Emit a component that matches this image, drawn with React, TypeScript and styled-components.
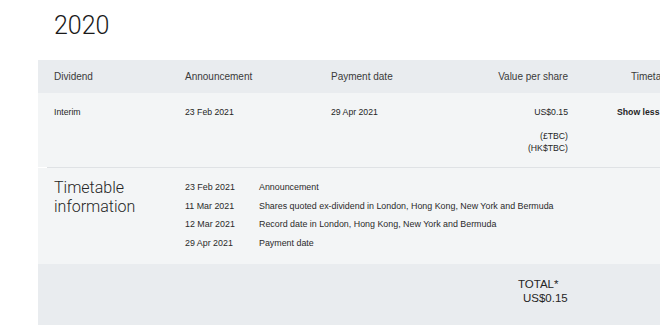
import React from "react";
import styled, { createGlobalStyle } from "styled-components";

const Global = createGlobalStyle`
  html, body { margin: 0; padding: 0; background: #ffffff; }
  body {
    font-family: "Liberation Sans", Arial, sans-serif;
    color: #252525;
    overflow: hidden;
    width: 660px;
    height: 330px;
  }
`;

const Page = styled.div`
  width: 660px;
  height: 330px;
  overflow: hidden;
  padding-left: 38px;
  box-sizing: border-box;
`;

const Title = styled.h2`
  margin: 0;
  padding: 10px 0 0 16px;
  height: 60px;
  box-sizing: border-box;
  font-family: Roboto, "Liberation Sans", sans-serif;
  font-weight: 300;
  font-size: 25px;
  line-height: 32px;
  color: #1a1a1a;
`;

const Table = styled.div`
  width: 720px;
`;

const Row = styled.div<{ $bg: string; $h?: number }>`
  display: grid;
  grid-template-columns: 131px 146px 140px 97px 206px;
  padding-left: 16px;
  background: ${(p) => p.$bg};
  ${(p) => (p.$h ? `height: ${p.$h}px;` : "")}
  box-sizing: border-box;
`;

const HeadCell = styled.div<{ $align?: string; $pad?: number }>`
  font-size: 10px;
  line-height: 33px;
  color: #3a3a3a;
  text-align: ${(p) => p.$align || "left"};
  padding-left: ${(p) => p.$pad || 0}px;
`;

const Cell = styled.div<{ $align?: string; $pad?: number; $bold?: boolean }>`
  font-size: 8.7px;
  line-height: 12px;
  padding-top: 13px;
  color: #252525;
  text-align: ${(p) => p.$align || "left"};
  padding-left: ${(p) => p.$pad || 0}px;
  font-weight: ${(p) => (p.$bold ? 700 : 400)};
`;

const Sub = styled.div`
  margin-top: 12px;
`;

const Divider = styled.div`
  height: 1px;
  margin-left: 9px;
  background: #dfe2e5;
`;

const TimetableSection = styled.div`
  display: grid;
  grid-template-columns: 131px 74px 1fr;
  padding: 10px 0 11px 16px;
  background: #f3f5f6;
`;

const SectionTitle = styled.div`
  font-family: Roboto, "Liberation Sans", sans-serif;
  font-weight: 300;
  font-size: 16px;
  line-height: 19px;
  color: #252525;
`;

const EventList = styled.div`
  grid-column: 2 / 4;
  display: grid;
  grid-template-columns: 74px 1fr;
`;

const EventText = styled.div`
  font-size: 8.9px;
  line-height: 18.7px;
  color: #2a2a2a;
`;

const TotalSection = styled.div`
  height: 61px;
  background: #e9ecef;
  padding: 13px 0 0 480px;
  box-sizing: border-box;
`;

const TotalText = styled.div<{ $indent?: number }>`
  font-size: 11.5px;
  line-height: 14px;
  color: #252525;
  padding-left: ${(p) => p.$indent || 0}px;
`;

const events: [string, string][] = [
  ["23 Feb 2021", "Announcement"],
  ["11 Mar 2021", "Shares quoted ex-dividend in London, Hong Kong, New York and Bermuda"],
  ["12 Mar 2021", "Record date in London, Hong Kong, New York and Bermuda"],
  ["29 Apr 2021", "Payment date"],
];

export default function App() {
  return (
    <>
      <Global />
      <Page>
        <Title>2020</Title>
        <Table>
          <Row $bg="#e9ecef" $h={33}>
            <HeadCell>Dividend</HeadCell>
            <HeadCell>Announcement</HeadCell>
            <HeadCell>Payment date</HeadCell>
            <HeadCell $align="right">Value per share</HeadCell>
            <HeadCell $pad={63}>Timetable</HeadCell>
          </Row>
          <Row $bg="#f3f5f6" $h={74}>
            <Cell>Interim</Cell>
            <Cell>23 Feb 2021</Cell>
            <Cell>29 Apr 2021</Cell>
            <Cell $align="right">
              US$0.15
              <Sub>
                (£TBC)
                <br />
                (HK$TBC)
              </Sub>
            </Cell>
            <Cell $pad={49} $bold>
              Show less
            </Cell>
          </Row>
          <Divider />
          <TimetableSection>
            <SectionTitle>
              Timetable
              <br />
              information
            </SectionTitle>
            <EventList>
              {events.map(([d, t]) => (
                <React.Fragment key={d}>
                  <EventText>{d}</EventText>
                  <EventText>{t}</EventText>
                </React.Fragment>
              ))}
            </EventList>
          </TimetableSection>
          <TotalSection>
            <TotalText>TOTAL*</TotalText>
            <TotalText $indent={5}>US$0.15</TotalText>
          </TotalSection>
        </Table>
      </Page>
    </>
  );
}
